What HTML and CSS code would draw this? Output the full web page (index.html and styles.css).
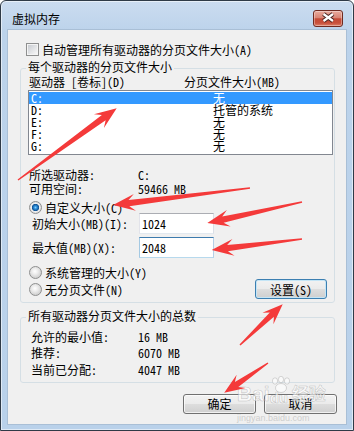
FILE: index.html
```html
<!DOCTYPE html>
<html lang="zh-CN">

<head>
  <meta charset="UTF-8" />
  <title>虚拟内存</title>
  <link rel="stylesheet" href="styles.css">
</head>

<body>
  <div class="window">
    <div class="titlebar">
      <span class="title">虚拟内存</span>
      <div class="close-btn">
        <svg width="30" height="17" viewBox="0 0 30 17">
          <path d="M10.5 4 L20 11 M20 4 L10.5 11" stroke="#4a2622" stroke-width="4.2" />
          <path d="M10.5 4 L20 11 M20 4 L10.5 11" stroke="#fff" stroke-width="2.2" />
        </svg>
      </div>
    </div>

    <div class="client">
      <div class="check-row"><span class="checkbox"></span>自动管理所有驱动器的分页文件大小(A)</div>

      <fieldset class="group group-drives">
        <legend>每个驱动器的分页文件大小</legend>
        <div class="list-head"><span>驱动器 [卷标](D)</span><span>分页文件大小(MB)</span></div>
        <div class="listbox">
          <div class="list-row selected"><span>C:</span><span>无</span></div>
          <div class="list-row"><span>D:</span><span>托管的系统</span></div>
          <div class="list-row"><span>E:</span><span>无</span></div>
          <div class="list-row"><span>F:</span><span>无</span></div>
          <div class="list-row"><span>G:</span><span>无</span></div>
        </div>

        <div class="info">
          <span>所选驱动器:</span><span>C:</span>
          <span>可用空间:</span><span>59466 MB</span>
        </div>

        <div class="radio-row custom"><span class="radio checked"></span>自定义大小(C)</div>
        <div class="field-row"><span>初始大小(MB)(I):</span><div class="textbox">1024</div></div>
        <div class="field-row second"><span>最大值(MB)(X):</span><div class="textbox focused">2048</div></div>
        <div class="radio-row managed"><span class="radio"></span>系统管理的大小(Y)</div>
        <div class="radio-row none">
          <span class="radio"></span>无分页文件(N)
          <button class="btn btn-set">设置(S)</button>
        </div>
      </fieldset>

      <fieldset class="group group-total">
        <legend>所有驱动器分页文件大小的总数</legend>
        <div class="totals">
          <span>允许的最小值:</span><span>16 MB</span>
          <span>推荐:</span><span>6070 MB</span>
          <span>当前已分配:</span><span>4047 MB</span>
        </div>
      </fieldset>

      <div class="dialog-buttons">
        <button class="btn">确定</button>
        <button class="btn">取消</button>
      </div>
    </div>

    <!-- watermark of the source site -->
    <div class="watermark">
      <div class="wm-logo">
        <span class="wm-bai">Bai</span>
        <span class="wm-paw">
          <svg width="22" height="26" viewBox="0 0 22 26">
            <g fill="rgba(255,255,255,0.6)" stroke="rgba(150,150,150,0.45)" stroke-width="0.8">
              <ellipse cx="5" cy="5" rx="2.6" ry="3.2" />
              <ellipse cx="11" cy="3.5" rx="2.6" ry="3.2" />
              <ellipse cx="17" cy="5" rx="2.6" ry="3.2" />
              <ellipse cx="11" cy="12" rx="5.5" ry="4.5" />
            </g>
          </svg>
          <span class="wm-du">du</span>
        </span>
        <span class="wm-jy">经验</span>
      </div>
      <div class="wm-url">jingyan.baidu.com</div>
    </div>

    <!-- red annotation arrows over the dialog -->
    <svg class="arrows" width="354" height="431" viewBox="0 0 354 431">
      <g fill="#f43a3a">
        <polygon transform="translate(18 180) rotate(-36)" points="0,-0.7 106,-3.2 100,-8.5 122,0 100,8.5 106,3.2 0,0.7" />
        <polygon transform="translate(250 188) rotate(172.9)" points="0,-0.7 122,-3.2 116,-8.5 138,0 116,8.5 122,3.2 0,0.7" />
        <polygon transform="translate(302 202) rotate(167.5)" points="0,-0.7 81,-3.2 75,-8.5 97,0 75,8.5 81,3.2 0,0.7" />
        <polygon transform="translate(302 239) rotate(173)" points="0,-0.7 75,-3.2 69,-8.5 91,0 69,8.5 75,3.2 0,0.7" />
        <polygon transform="translate(240 345) rotate(-43.6)" points="0,-0.7 44,-3 38.5,-8 59,0 38.5,8 44,3 0,0.7" />
        <polygon transform="translate(268 363) rotate(145.7)" points="0,-0.7 38,-3 32.5,-8 53,0 32.5,8 38,3 0,0.7" />
      </g>
    </svg>
  </div>
</body>

</html>
```

FILE: styles.css
```css
/* Base */
* {
  box-sizing: border-box;
}

body {
  margin: 0;
  font-family: "Noto Sans Mono CJK SC", "Noto Sans CJK SC", sans-serif;
  font-size: 12px;
  color: #000;
  background: #fff;
}

/* Window frame */
.window {
  position: relative;
  width: 354px;
  height: 431px;
  border: 1px solid #2f3a47;
  border-radius: 6px 6px 0 0;
  background: linear-gradient(#cbdcf0, #bcd3eb 30px, #b9d1ea);
  box-shadow: inset 0 0 0 1px rgba(255, 255, 255, 0.55);
  overflow: hidden;
}

.titlebar {
  display: flex;
  justify-content: space-between;
  align-items: flex-start;
  height: 29px;
  padding: 0 10px 0 11px;
}

.title {
  margin-top: 11px;
  line-height: 14px;
}

.close-btn {
  width: 30px;
  height: 17px;
  margin-top: 9px;
  border: 1px solid #6f2a20;
  border-radius: 3px;
  background: linear-gradient(#e9ab9e 0%, #d98474 45%, #c44a36 52%, #c8503b 80%, #dd8068 100%);
  box-shadow: inset 0 0 0 1px rgba(255, 255, 255, 0.35);
}

.close-btn svg {
  display: block;
  margin: -1px 0 0 -1px;
}

.client {
  height: 394px;
  margin: 0 7px;
  padding: 12px 11px 0 12px;
  background: #f0f0f0;
  box-shadow: 0 0 0 1px #a9bfd6;
}

/* Checkbox + radios */
.check-row {
  display: flex;
  align-items: center;
  gap: 3px;
  height: 15px;
  padding-left: 6px;
}

.checkbox {
  width: 13px;
  height: 13px;
  border: 1px solid #8e8f8f;
  background: linear-gradient(135deg, #c3c7cd 0%, #e6e7e9 60%, #fbfbfb 100%);
  box-shadow: inset 0 0 0 1px #f4f4f4;
}

.radio {
  flex-shrink: 0;
  width: 13px;
  height: 13px;
  border: 1px solid #8e8f8f;
  border-radius: 50%;
  background: radial-gradient(circle at 45% 40%, #ffffff 0, #ececec 3px, #d4d4d4 6px);
}

.radio.checked {
  background: radial-gradient(circle at 50% 50%, #7fd0ff 0, #2b8ad6 1.6px, #10508f 3.4px, #f2f2f2 3.9px, #d6d6d6 6px);
}

.radio-row {
  display: flex;
  align-items: center;
  gap: 3px;
  padding-left: 1px;
}

/* Group boxes */
.group {
  margin: 0;
  min-width: 0;
  padding: 0 1px 3px 7px;
  border: 1px solid #d5dfe5;
  border-radius: 3px;
}

.group legend {
  margin-left: -2px;
  padding: 0 2px 3px;
  line-height: 12px;
}

.group-drives {
  margin-top: 4px;
}

.list-head {
  display: grid;
  grid-template-columns: 155px auto;
  height: 12px;
  line-height: 12px;
  padding-left: 1px;
}

.listbox {
  height: 65px;
  margin-top: 2px;
  padding: 1px 0 2px;
  border: 1px solid #828790;
  background: #fff;
}

.list-row {
  display: grid;
  grid-template-columns: 182px auto;
  height: 12px;
  line-height: 12px;
  padding-left: 2px;
}

.list-row.selected {
  background: #3399ff;
  color: #fff;
}

.info {
  display: grid;
  grid-template-columns: 109px auto;
  grid-auto-rows: 14px;
  align-items: center;
  margin-top: 12px;
  padding-left: 1px;
}

.radio-row.custom {
  height: 12px;
  margin-top: 6px;
}

.field-row {
  display: grid;
  grid-template-columns: 107px 75px;
  align-items: center;
  height: 21px;
  padding-left: 4px;
}

.field-row.second {
  margin-top: 3px;
}

.textbox {
  height: 21px;
  padding-left: 2px;
  line-height: 19px;
  background: #fff;
  border: 1px solid;
  border-color: #abadb3 #dbdfe6 #e3e9ef #e2e3ea;
}

.textbox.focused {
  border-color: #3d7bad #b5cfe7 #b7d9ed #a4c9e3;
}

.radio-row.managed {
  height: 13px;
  margin-top: 8px;
}

.radio-row.none {
  height: 20px;
}

/* Buttons */
.btn {
  height: 20px;
  padding: 0;
  font: inherit;
  color: #000;
  border: 1px solid #707070;
  border-radius: 3px;
  background: linear-gradient(#f2f2f2 0%, #ebebeb 48%, #dddddd 52%, #cfcfcf 100%);
  box-shadow: inset 0 0 0 1px rgba(255, 255, 255, 0.7);
}

.btn-set {
  width: 72px;
  margin-left: auto;
  margin-right: 6px;
  border-color: #3c7fb1;
  box-shadow: inset 0 0 0 1px #c4e5f6;
}

.group-total {
  margin-top: 7px;
  padding-bottom: 4px;
}

.totals {
  display: grid;
  grid-template-columns: 107px auto;
  grid-auto-rows: 16.5px;
  align-items: center;
  margin-top: 3px;
  padding-left: 3px;
}

.dialog-buttons {
  display: flex;
  justify-content: flex-end;
  gap: 8px;
  margin-top: 11px;
  margin-right: -2px;
}

.dialog-buttons .btn {
  width: 73px;
}

/* Watermark */
.watermark {
  position: absolute;
  left: 236px;
  top: 375px;
  color: rgba(255, 255, 255, 0.65);
  pointer-events: none;
}

.wm-logo {
  display: flex;
  align-items: flex-start;
}

.wm-bai {
  margin-top: 7px;
  font-family: "Liberation Sans", sans-serif;
  font-size: 21px;
  font-weight: bold;
  line-height: 22px;
  -webkit-text-stroke: 0.6px rgba(140, 140, 140, 0.45);
}

.wm-paw {
  position: relative;
  width: 22px;
  height: 30px;
}

.wm-paw svg {
  display: block;
}

.wm-du {
  position: absolute;
  left: 0;
  top: 14px;
  font-family: "Liberation Sans", sans-serif;
  font-size: 15px;
  font-weight: bold;
  line-height: 15px;
  -webkit-text-stroke: 0.6px rgba(140, 140, 140, 0.45);
}

.wm-jy {
  margin-top: 8px;
  font-size: 17px;
  font-weight: bold;
  line-height: 18px;
  -webkit-text-stroke: 0.6px rgba(140, 140, 140, 0.45);
}

.wm-url {
  margin-top: 8px;
  font-family: "Liberation Sans", sans-serif;
  font-size: 9px;
  line-height: 9px;
  color: rgba(170, 170, 170, 0.5);
}

/* Annotation arrows */
.arrows {
  position: absolute;
  top: -1px;
  left: -1px;
  pointer-events: none;
}
```
